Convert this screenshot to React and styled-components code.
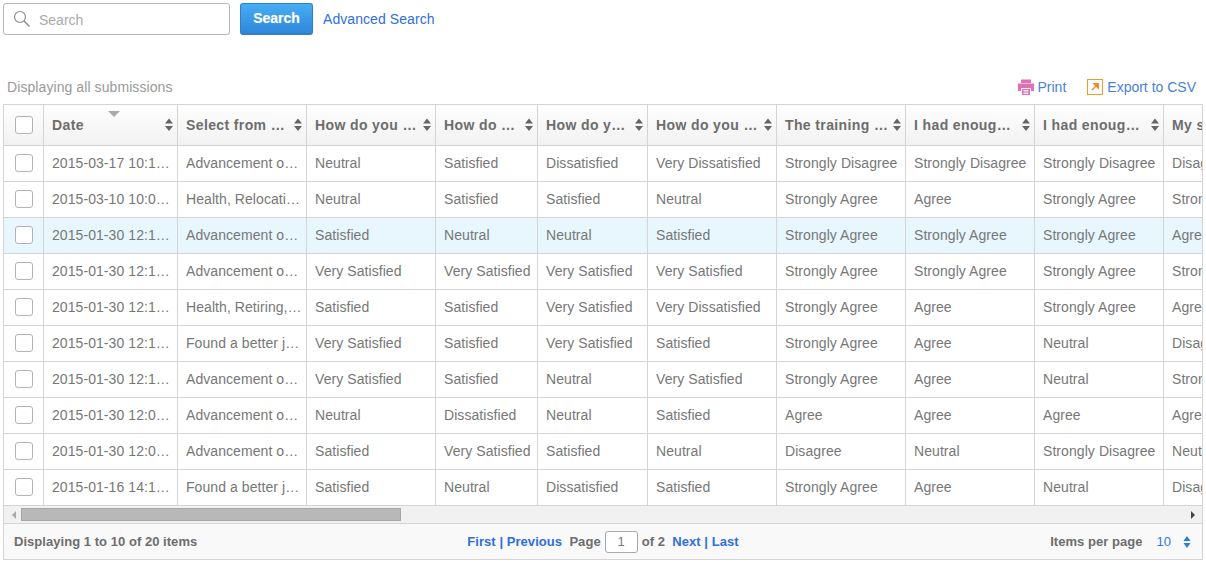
import React from "react";
import styled, { createGlobalStyle } from "styled-components";

const Global = createGlobalStyle`
  html, body { margin: 0; padding: 0; background: #fff; overflow: hidden; }
  body { font-family: "Liberation Sans", Arial, sans-serif; font-size: 14px; color: #777; }
`;
const Page = styled.div`
  width: 1206px; height: 562px; padding: 3px 3px 0 3px; box-sizing: border-box;
`;
const SearchBar = styled.div`
  display: flex; align-items: center; height: 32px;
`;
const SearchField = styled.div`
  width: 227px; height: 32px; box-sizing: border-box; border: 1px solid #b5b5b5; border-radius: 3px;
  display: flex; align-items: center; padding-left: 10px; gap: 7px; color: #aaa; font-size: 14px;
  padding-top: 1px;
`;
const SearchIcon = styled.svg`
  position: relative; top: -1px; left: -1px;
`;
const SearchButton = styled.button`
  margin-left: 10px; width: 73px; height: 32px; box-sizing: border-box; padding: 0 0 1px; border: 1px solid #2f7fc9; border-bottom-width: 2px;
  border-radius: 3px; background: linear-gradient(#47aef3, #2f86da); color: #fff; font: bold 14px "Liberation Sans", Arial, sans-serif;
  text-shadow: 0 0 1px rgba(255,255,255,.4);
`;
const Link = styled.a`
  color: ${p => p.$light ? "#4a7fe0" : "#2f6fdc"}; font-weight: ${p => p.$bold ? "bold" : "normal"}; white-space: pre;
`;
const AdvLink = styled(Link)`
  margin-left: 10px; letter-spacing: .07px;
`;
const Caption = styled.div`
  display: flex; justify-content: space-between; align-items: center; margin-top: 36px; height: 33px; padding: 0 7px 2px 4px; box-sizing: border-box; font-size: 14px;
  color: #999; letter-spacing: .08px;
`;
const Actions = styled.div`
  display: flex; align-items: center; letter-spacing: 0;
`;
const Action = styled.div`
  display: flex; align-items: center; gap: ${p => p.$gap}px; margin-left: ${p => p.$ml}px;
`;
const Panel = styled.div`
  width: 1200px; border: 1px solid #d4d4d4; box-sizing: border-box; overflow: hidden; height: 456px;
  display: flex; flex-direction: column;
`;
const Grid = styled.table`
  border-collapse: separate; border-spacing: 0; table-layout: fixed; width: 1240px; flex: none;
`;
const HeadCell = styled.th`
  height: 41px; box-sizing: border-box; padding: 0 20px 1px 8px; text-align: left; font-weight: bold; font-size: 14px; color: #6d6d6d; letter-spacing: .38px;
  background: linear-gradient(#fefefe, #f2f2f2); border-right: 1px solid #d4d4d4; border-bottom: 1px solid #d4d4d4;
  position: relative; white-space: nowrap; overflow: hidden;
`;
const Cell = styled.td`
  height: 36px; box-sizing: border-box; padding: 0 3px 1px 8px; border-right: 1px solid #d4d4d4; border-bottom: 1px solid #d4d4d4;
  white-space: nowrap; overflow: hidden; font-size: 14px; color: #777; letter-spacing: .07px;
  background: ${p => p.$hl ? "#e8f6fd" : "#fff"};
`;
const Row = styled.tr`
  & > td:last-child, & > th:last-child { border-right: none; }
`;
const CheckCell = styled(Cell)`
  padding: 0 0 1px; text-align: center;
`;
const CheckHead = styled(HeadCell)`
  padding: 0 0 1px; text-align: center;
`;
const Check = styled.span`
  display: block; width: 16px; height: 16px; margin: 0 auto; border: 1px solid #b3b3b3; border-radius: 3px; background: #fff;
`;
const Sort = styled.svg`
  position: absolute; right: 4px; top: 13px;
`;
const SortMark = styled.span`
  position: absolute; left: 64px; top: 6px; width: 0; height: 0; border-left: 6px solid transparent; border-right: 6px solid transparent; border-top: 6px solid #aaa;
`;
const Scroll = styled.div`
  height: 18px; flex: none; background: #f1f1f1; border-bottom: 1px solid #d4d4d4; box-sizing: border-box; display: flex; align-items: center; justify-content: space-between; padding: 0 7px 0 8px;
`;
const Thumb = styled.div`
  width: 380px; height: 13px; box-sizing: border-box; background: #b8b8b8; border: 1px solid #a6a6a6; margin: 0 auto 0 5px;
`;
const Arrow = styled.span`
  width: 0; height: 0; border-top: 4px solid transparent; border-bottom: 4px solid transparent;
  ${p => p.$right ? "border-left: 4px solid #444;" : "border-right: 4px solid #aaa;"}
`;
const Footer = styled.div`
  flex: 1; background: #f9f9f9; display: grid; grid-template-columns: 1fr auto 1fr; align-items: center; padding: 0 10px; font-size: 13px; font-weight: bold; color: #6d6d6d; letter-spacing: .04px;
`;
const Pager = styled.div`
  display: flex; align-items: center; white-space: pre; font-size: 13px; letter-spacing: .05px;
`;
const PageBox = styled.span`
  width: 33px; height: 22px; margin: 0 4px; box-sizing: border-box; border: 1px solid #a9a9a9; border-radius: 3px; background: #fff; display: flex; align-items: center; justify-content: center; font-weight: normal; color: #777;
`;
const PerPage = styled.div`
  display: flex; align-items: center; justify-content: flex-end; padding-right: 1px;
`;
const PerValue = styled.span`
  color: #2a7de1; font-weight: normal; font-size: 13px; margin: 0 12px 0 14px;
`;

const widths = [40, 134, 129, 129, 102, 110, 129, 129, 129, 129, 80];
const heads = ["", "Date", "Select from …", "How do you …", "How do …", "How do y…", "How do you …", "The training …", "I had enoug…", "I had enoug…", "My s"];
const rows = [
  ["2015-03-17 10:1…", "Advancement o…", "Neutral", "Satisfied", "Dissatisfied", "Very Dissatisfied", "Strongly Disagree", "Strongly Disagree", "Strongly Disagree", "Disagree"],
  ["2015-03-10 10:0…", "Health, Relocati…", "Neutral", "Satisfied", "Satisfied", "Neutral", "Strongly Agree", "Agree", "Strongly Agree", "Strongly"],
  ["2015-01-30 12:1…", "Advancement o…", "Satisfied", "Neutral", "Neutral", "Satisfied", "Strongly Agree", "Strongly Agree", "Strongly Agree", "Agree"],
  ["2015-01-30 12:1…", "Advancement o…", "Very Satisfied", "Very Satisfied", "Very Satisfied", "Very Satisfied", "Strongly Agree", "Strongly Agree", "Strongly Agree", "Strongly"],
  ["2015-01-30 12:1…", "Health, Retiring,…", "Satisfied", "Satisfied", "Very Satisfied", "Very Dissatisfied", "Strongly Agree", "Agree", "Strongly Agree", "Agree"],
  ["2015-01-30 12:1…", "Found a better j…", "Very Satisfied", "Satisfied", "Very Satisfied", "Satisfied", "Strongly Agree", "Agree", "Neutral", "Disagree"],
  ["2015-01-30 12:1…", "Advancement o…", "Very Satisfied", "Satisfied", "Neutral", "Very Satisfied", "Strongly Agree", "Agree", "Neutral", "Strongly"],
  ["2015-01-30 12:0…", "Advancement o…", "Neutral", "Dissatisfied", "Neutral", "Satisfied", "Agree", "Agree", "Agree", "Agree"],
  ["2015-01-30 12:0…", "Advancement o…", "Satisfied", "Very Satisfied", "Satisfied", "Neutral", "Disagree", "Neutral", "Strongly Disagree", "Neutral"],
  ["2015-01-16 14:1…", "Found a better j…", "Satisfied", "Neutral", "Dissatisfied", "Satisfied", "Strongly Agree", "Agree", "Neutral", "Disagree"],
];

const SortIcon = () => (
  <Sort width="8" height="14" viewBox="0 0 8 14">
    <path d="M4 0.5 L8 5.5 H0 Z M0 8 H8 L4 13 Z" fill="#666" />
  </Sort>
);

export default function App() {
  return (
    <Page>
      <Global />
      <SearchBar>
        <SearchField>
          <SearchIcon width="18" height="18" viewBox="0 0 18 18" fill="none" stroke="#8a8a8a">
            <circle cx="7" cy="7" r="5.5" strokeWidth="1.2" />
            <path d="M11 11 L16.5 16.5" strokeWidth="1.4" />
          </SearchIcon>
          <span>Search</span>
        </SearchField>
        <SearchButton>Search</SearchButton>
        <AdvLink>Advanced Search</AdvLink>
      </SearchBar>
      <Caption>
        <span>Displaying all submissions</span>
        <Actions>
          <Action $gap={4} $ml={0}>
            <svg width="16" height="16" viewBox="0 0 16 16">
              <path d="M3 0.5H13V4H3Z M0 4.5H16V12H13V9H3V12H0Z" fill="#e070b8" />
              <path d="M4 10H12V16H4Z" fill="#e070b8" />
              <path d="M5.5 11.5H10.5M5.5 13H10.5M5.5 14.5H10.5" stroke="#fff" strokeWidth=".8" />
            </svg>
            <Link $light>Print</Link>
          </Action>
          <Action $gap={4} $ml={21}>
            <svg width="16" height="16" viewBox="0 0 16 16">
              <rect x=".5" y=".5" width="15" height="15" fill="#fff" stroke="#f29a2e" />
              <path d="M5 11 L10 6 M7 4.8 H11.2 V9 Z" stroke="#f08a1c" fill="#f08a1c" strokeWidth="1.4" />
            </svg>
            <Link $light>Export to CSV</Link>
          </Action>
        </Actions>
      </Caption>
      <Panel>
        <Grid>
          <colgroup>
            {widths.map((w, i) => <col key={i} style={{ width: w }} />)}
          </colgroup>
          <thead>
            <Row>
              <CheckHead><Check /></CheckHead>
              {heads.slice(1).map((h, i) => (
                <HeadCell key={i}>
                  {i === 0 && <SortMark />}
                  {h}
                  <SortIcon />
                </HeadCell>
              ))}
            </Row>
          </thead>
          <tbody>
            {rows.map((r, i) => (
              <Row key={i}>
                <CheckCell $hl={i === 2}><Check /></CheckCell>
                {r.map((c, j) => <Cell key={j} $hl={i === 2}>{c}</Cell>)}
              </Row>
            ))}
          </tbody>
        </Grid>
        <Scroll>
          <Arrow />
          <Thumb />
          <Arrow $right />
        </Scroll>
        <Footer>
          <span>Displaying 1 to 10 of 20 items</span>
          <Pager>
            <Link $bold>First | Previous</Link>
            <span>{"  Page"}</span>
            <PageBox>1</PageBox>
            <span>{"of 2  "}</span>
            <Link $bold>Next | Last</Link>
          </Pager>
          <PerPage>
            <span>Items per page</span>
            <PerValue>10</PerValue>
            <svg width="8" height="14" viewBox="0 0 8 14"><path d="M4 1 L7.5 6 H.5 Z M.5 8 H7.5 L4 13 Z" fill="#2a7de1" /></svg>
          </PerPage>
        </Footer>
      </Panel>
    </Page>
  );
}
